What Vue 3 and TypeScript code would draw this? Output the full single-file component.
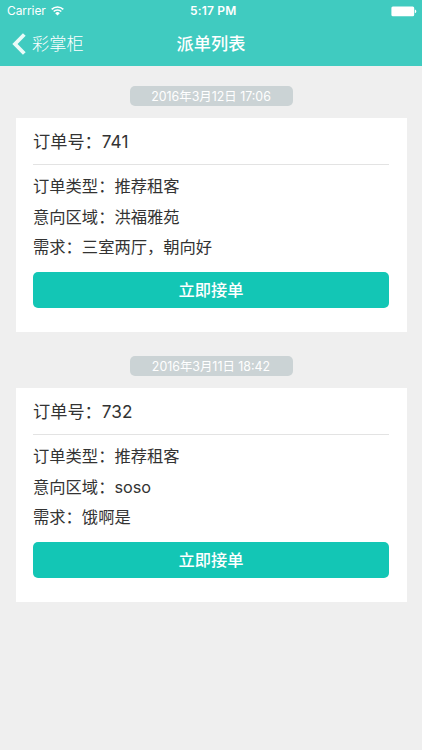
<script setup lang="ts">
interface Order {
  id: number
  time: string
  type: string
  area: string
  demand: string
}

const orders: Order[] = [
  { id: 741, time: '2016年3月12日 17:06', type: '推荐租客', area: '洪福雅苑', demand: '三室两厅，朝向好' },
  { id: 732, time: '2016年3月11日 18:42', type: '推荐租客', area: 'soso', demand: '饿啊是' },
]
</script>

<template>
  <div class="screen" lang="zh-CN">
    <header class="header">
      <div class="status">
        <div class="carrier">
          <span>Carrier</span>
          <svg class="wifi" viewBox="0 0 13 10" width="13" height="10">
            <path d="M.7 3.4a8.2 8.2 0 0 1 11.6 0M2.7 5.5a5.4 5.4 0 0 1 7.6 0" fill="none" stroke="#fff" stroke-width="1.6" />
            <path d="M6.5 9.5 4.2 7.2a3.25 3.25 0 0 1 4.6 0z" fill="#fff" />
          </svg>
        </div>
        <span class="clock">5:17 PM</span>
        <div class="power">
          <svg viewBox="0 0 26 11" width="26" height="11">
            <rect x=".4" y=".5" width="22.8" height="9.8" rx="1.5" fill="#fff" />
            <path d="M23.8 3.5c2 .5 2 3.3 0 3.8z" fill="#fff" />
          </svg>
        </div>
      </div>
      <nav class="nav">
        <a class="back">
          <svg viewBox="0 0 14 22" width="14" height="22">
            <path d="M12.3 1.5 3 11l9.3 9.5" fill="none" stroke="#e9fbf8" stroke-width="3.8" />
          </svg>
          <span>彩掌柜</span>
        </a>
        <h1 class="title">派单列表</h1>
        <span></span>
      </nav>
    </header>

    <main class="list">
      <section v-for="order in orders" :key="order.id" class="entry">
        <time class="time">{{ order.time }}</time>
        <article class="card">
          <h2 class="number">订单号：<span class="digits">{{ order.id }}</span></h2>
          <div class="details">
            <p>订单类型：{{ order.type }}</p>
            <p>意向区域：{{ order.area }}</p>
            <p>需求：{{ order.demand }}</p>
          </div>
          <button class="accept" type="button">立即接单</button>
        </article>
      </section>
    </main>
  </div>
</template>

<style>
body {
  background: #efefef;
}
</style>

<style scoped>
.screen {
  box-sizing: border-box;
  min-height: 750px;
  background: #efefef;
  color: #333;
  font-family: Inter, "Noto Sans CJK SC", sans-serif;
}

.header {
  height: 65.5px;
  background: #40cbc0;
  color: #fff;
}

.status {
  display: grid;
  grid-template-columns: 1fr auto 1fr;
  align-items: center;
  height: 22px;
  padding: 0 5.5px 0 7px;
  font-size: 12px;
  line-height: 22px;
}

.carrier {
  display: flex;
  align-items: center;
  gap: 5px;
  letter-spacing: -0.08px;
}

.clock {
  padding-left: 3px;
  font-weight: 600;
  letter-spacing: 0.2px;
}

.power {
  display: flex;
  justify-content: flex-end;
}

.nav {
  display: grid;
  grid-template-columns: 1fr auto 1fr;
  align-items: center;
  height: 43px;
  padding: 0 12px;
}

.back {
  display: flex;
  align-items: center;
  gap: 6px;
  font-size: 17.2px;
  font-weight: 300;
  line-height: 26px;
}

.title {
  margin: 0;
  font-size: 17.2px;
  font-weight: 500;
  line-height: 26px;
}

.list {
  display: flex;
  flex-direction: column;
  gap: 24px;
  padding: 20.5px 15.5px 0;
}

.entry {
  display: flex;
  flex-direction: column;
  align-items: center;
  gap: 12px;
}

.time {
  width: 163px;
  height: 20px;
  border-radius: 5px;
  background: #cbd3d5;
  color: #fff;
  font-size: 12.4px;
  line-height: 21px;
  text-align: center;
}

.card {
  box-sizing: border-box;
  width: 100%;
  height: 214px;
  padding: 0 17.5px;
  background: #fff;
}

.number {
  box-sizing: border-box;
  height: 47px;
  margin: 0;
  border-bottom: 1px solid #e3e3e3;
  font-size: 17.2px;
  font-weight: 400;
  line-height: 47px;
}

.digits {
  letter-spacing: 0.1px;
}

.details {
  padding: 6px 0 9.5px;
  font-size: 16.3px;
}

.details p {
  height: 30.6px;
  margin: 0;
  line-height: 30.6px;
}

.accept {
  display: block;
  width: 100%;
  height: 36px;
  padding: 0;
  border: 0;
  border-radius: 5px;
  background: #13c6b5;
  color: #fff;
  font-family: inherit;
  font-size: 16.3px;
  font-weight: 500;
  line-height: 36px;
}
</style>
